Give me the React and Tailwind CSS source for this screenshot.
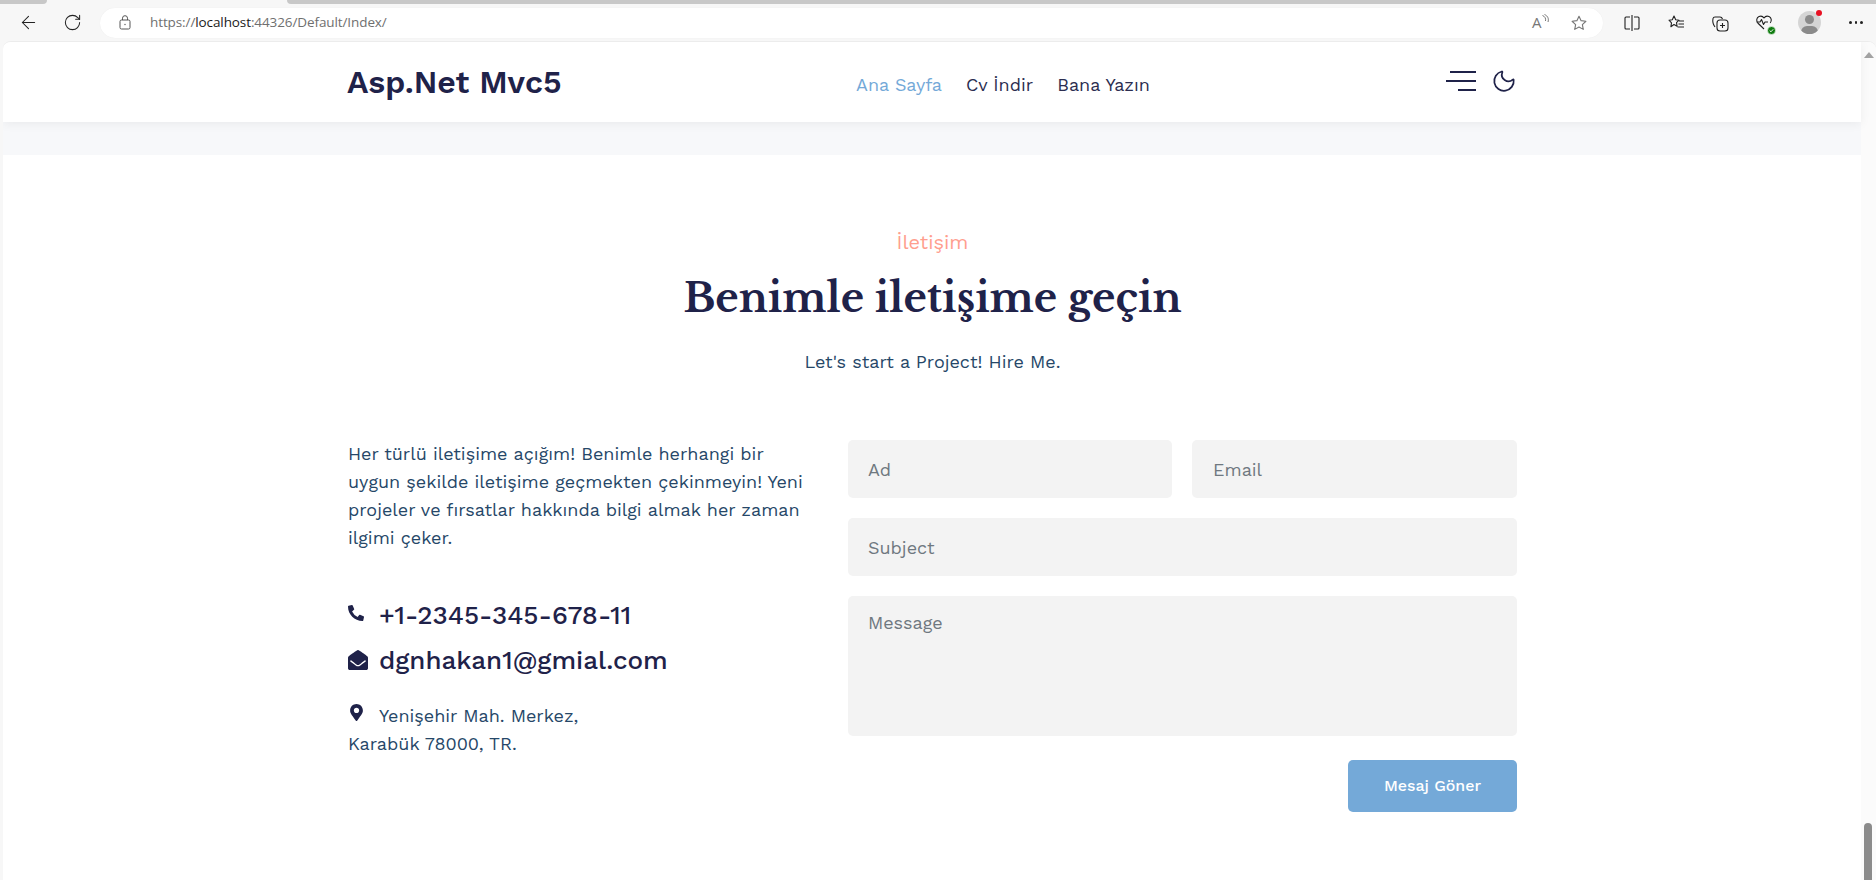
import { ArrowLeft, RotateCw, Moon } from "lucide-react";
import { FaPhoneAlt, FaEnvelopeOpen, FaMapMarkerAlt } from "react-icons/fa";

const sans = "font-['Work_Sans','Inter','Open_Sans',sans-serif]";

const BrowserBar = () => (
  <div className="bg-[#f7f7f7]">
    {/* tab strip */}
    <div className="flex h-1">
      <div className="w-[47px] bg-[#c8c8c8] rounded-br"></div>
      <div className="w-[240px] bg-[#f7f7f7]"></div>
      <div className="flex-1 bg-[#c8c8c8] rounded-bl"></div>
    </div>
    <div className="flex items-center h-[37px]">
      <div className="w-[100px] shrink-0 flex items-center pl-[18px] gap-[24px]">
        <ArrowLeft size={21} strokeWidth={1.2} className="text-[#222]" />
        <RotateCw size={19} strokeWidth={1.3} className="text-[#222]" />
      </div>
      <div className="w-[1503px] h-[30px] bg-white rounded-full flex items-center pl-[19px] pr-[15px] shadow-[0_0_1px_rgba(0,0,0,0.08)]">
        <svg width="12" height="15" viewBox="0 0 12 15" fill="none" stroke="#555" strokeWidth="1">
          <rect x="1" y="5" width="10" height="9" rx="1.5" />
          <path d="M3.5 5V3.2a2.5 2.5 0 0 1 5 0V5" />
          <circle cx="6" cy="9.5" r="0.7" fill="#555" stroke="none" />
        </svg>
        <span className="ml-[19px] text-[13.5px] font-['Open_Sans',sans-serif] tracking-[-0.1px] text-[#6f6f6f] leading-none">
          https://<span className="text-[#1a1a1a]">localhost</span>:44326/Default/Index/
        </span>
        <div className="ml-auto flex items-center gap-[22px]">
          <div className="relative w-[16px] h-[16px] text-[15px] leading-none text-[#777] font-['Open_Sans',sans-serif]">
            A
            <svg className="absolute -top-[1px] -right-[2px]" width="8" height="9" viewBox="0 0 8 9" fill="none" stroke="#777" strokeWidth="1">
              <path d="M0.5 1.500C3 2.500 4 4.500 3.500 7M2.500 0.500C6 2 7 5 6 8" />
            </svg>
          </div>
          <svg width="18" height="18" viewBox="0 0 24 24" fill="none" stroke="#777" strokeWidth="1.500" strokeLinejoin="round">
            <path d="M12 3l2.800 5.900 6.400.800-4.700 4.400 1.200 6.400L12 17.300l-5.700 3.200 1.200-6.400-4.700-4.400 6.400-.800z" />
          </svg>
        </div>
      </div>
      <div className="flex-1 flex items-center pl-[20px] gap-[26px]">
        <svg width="18" height="18" viewBox="0 0 18 18" fill="none" stroke="#222" strokeWidth="1.100">
          <path d="M7 3H3a1 1 0 0 0-1 1v10a1 1 0 0 0 1 1h4M11 3h4a1 1 0 0 1 1 1v10a1 1 0 0 1-1 1h-4M9 1v16" />
        </svg>
        <svg width="18" height="18" viewBox="0 0 18 18" fill="none" stroke="#222" strokeWidth="1.100" strokeLinejoin="round">
          <path d="M7 2l1.700 3.800 3.300.4-2.500 2.500.6 3.600L7 10.500l-3.100 2.200.6-3.900L2 6.200l3.300-.4zM12 7h5M11.500 10H17M10.500 13H17" />
        </svg>
        <svg width="18" height="18" viewBox="0 0 18 18" fill="none" stroke="#222" strokeWidth="1.100" strokeLinejoin="round">
          <path d="M4 13C2.500 11 1.500 7 2 4.500c.2-1 1-1.500 2-1.500h5c1 0 2 .5 2.500 2" />
          <rect x="6" y="6" width="11" height="11" rx="3" />
          <path d="M11.500 9v5M9 11.500h5" />
        </svg>
        <div className="relative w-[18px] h-[18px]">
          <svg width="18" height="18" viewBox="0 0 18 18" fill="none" stroke="#222" strokeWidth="1.100" strokeLinejoin="round">
            <path d="M9 15L2.800 9C1 7 1.500 3.500 4 2.500c2-.8 4 0 5 1.500 1-1.500 3-2.300 5-1.500 2.500 1 3 4.500 1.200 6.500" />
            <path d="M1.500 8h3.500l1.500-2.500 2 5 1.500-2.500h3" />
          </svg>
          <svg className="absolute right-[-3px] bottom-[-3px]" width="9" height="9" viewBox="0 0 9 9">
            <circle cx="4.500" cy="4.500" r="4" fill="#107c10" stroke="#fff" strokeWidth="0.6" />
            <path d="M2.700 4.600l1.300 1.200 2.200-2.500" fill="none" stroke="#fff" strokeWidth="0.9" />
          </svg>
        </div>
        <div className="relative w-[23px] h-[23px] -ml-[1px]">
          <div className="relative w-[23px] h-[23px] rounded-full bg-[#d5d5d5] overflow-hidden">
            <span className="absolute left-[7px] top-[4px] w-[9px] h-[9px] rounded-full bg-[#8b8b8b]"></span>
            <span className="absolute left-[3px] top-[15px] w-[17px] h-[12px] rounded-full bg-[#8b8b8b]"></span>
          </div>
          <span className="absolute right-[-1px] top-[-1px] w-[6px] h-[6px] rounded-full bg-[#e81123]"></span>
        </div>
        <div className="ml-[2px] flex gap-[3px]">
          <span className="w-[2.5px] h-[2.5px] bg-[#222] rounded-full"></span>
          <span className="w-[2.5px] h-[2.5px] bg-[#222] rounded-full"></span>
          <span className="w-[2.5px] h-[2.5px] bg-[#222] rounded-full"></span>
        </div>
      </div>
    </div>
  </div>
);

const Field = ({ placeholder, className = "" }) => (
  <input
    placeholder={placeholder}
    className={`h-[58px] bg-[#f3f3f3] rounded-[5px] px-[20px] text-[18px] text-[#1f2a4d] placeholder:text-[#6f7880] outline-none ${className}`}
  />
);

const App = () => {
  return (
    <div className={`h-[880px] w-full overflow-hidden bg-[#f7f7f7] ${sans}`}>
      <BrowserBar />
      <div className="relative flex h-[839px] ml-[3px] bg-white rounded-t-lg overflow-hidden border-t border-[#ececec]">
        <main className="flex-1 min-w-0">
          {/* header */}
          <header className="relative z-10 h-[80px] bg-white shadow-[0_2px_10px_rgba(0,0,0,0.06)] pl-[344px] pr-[344px] flex items-center">
            <a className="text-[32px] font-semibold text-[#1f2249] leading-none w-[509px]">Asp.Net Mvc5</a>
            <nav className="flex items-center gap-[24px] text-[18px] pt-[4px] text-[#2b2d50]">
              <a className="text-[#74a9d8]">Ana Sayfa</a>
              <a>Cv İndir</a>
              <a>Bana Yazın</a>
            </nav>
            <div className="ml-auto flex items-center gap-[15px] pb-[3px]">
              <div className="flex flex-col items-end gap-[7px]">
                <span className="block w-[26px] h-[2px] bg-[#1f2249]"></span>
                <span className="block w-[30px] h-[2px] bg-[#1f2249]"></span>
                <span className="block w-[18px] h-[2px] bg-[#1f2249]"></span>
              </div>
              <Moon size={26} strokeWidth={1.6} className="text-[#1f2249] -rotate-[10deg]" />
            </div>
          </header>
          <div className="h-[33px] bg-[#f7f8fa]"></div>

          {/* contact section */}
          <section className="pl-[345px] pr-[344px]">
            <div className="text-center pt-[73px]">
              <p className="text-[20px] text-[#ff9e8e] leading-[28px]">İletişim</p>
              <h2 className="mt-[12px] text-[40px] font-bold text-[#1f2249] font-['Libre_Baskerville','Liberation_Serif',serif] leading-[60px]">
                Benimle iletişime geçin
              </h2>
              <p className="mt-[20px] text-[18px] text-[#264768] leading-[28px]">Let's start a Project! Hire Me.</p>
            </div>

            <div className="flex mt-[64px]">
              <div className="w-[500px] shrink-0">
                <p className="w-[470px] text-[18px] leading-[28px] text-[#264768]">
                  Her türlü iletişime açığım! Benimle herhangi bir uygun şekilde iletişime geçmekten çekinmeyin! Yeni projeler ve fırsatlar hakkında bilgi almak her zaman ilgimi çeker.
                </p>
                <div className="mt-[40px] flex items-center gap-[15px] text-[26px] font-medium text-[#1f2249] leading-[46px]">
                  <FaPhoneAlt size={16} className="-mt-[4px]" />
                  <span>+1-2345-345-678-11</span>
                </div>
                <div className="flex items-center gap-[11px] text-[26px] font-medium text-[#1f2249] leading-[45px]">
                  <FaEnvelopeOpen size={20} className="-mt-[2px]" />
                  <span>dgnhakan1@gmial.com</span>
                </div>
                <p className="mt-[19px] text-[18px] leading-[28px] text-[#264768]">
                  <FaMapMarkerAlt size={17} className="inline-block mr-[14px] -mt-[11px] text-[#1f2249]" />
                  Yenişehir Mah. Merkez,
                  <br />
                  Karabük 78000, TR.
                </p>
              </div>
              <form className="flex-1 flex flex-col gap-[20px]">
                <div className="flex gap-[20px]">
                  <Field placeholder="Ad" className="flex-1 min-w-0" />
                  <Field placeholder="Email" className="w-[325px] pl-[21px]" />
                </div>
                <Field placeholder="Subject" className="w-full" />
                <textarea
                  placeholder="Message"
                  className="h-[140px] bg-[#f3f3f3] rounded-[5px] px-[20px] py-[13px] text-[18px] placeholder:text-[#6f7880] outline-none resize-none"
                />
                <div className="flex justify-end mt-[4px]">
                  <button type="button" className="w-[169px] h-[52px] bg-[#74a9d8] rounded-[5px] text-white text-[16px] font-medium">
                    Mesaj Göner
                  </button>
                </div>
              </form>
            </div>
          </section>
        </main>

        {/* scrollbar */}
        <div className="relative w-[15px] shrink-0 bg-[#fbfbfb]">
          <span className="absolute top-[10px] left-[3px] border-x-[5px] border-x-transparent border-b-[6px] border-b-[#a3a3a3]"></span>
          <span className="absolute top-[781px] left-[3px] w-[8px] h-[60px] rounded-full bg-[#8b8b8b]"></span>
        </div>
      </div>
    </div>
  );
};

export default App;
